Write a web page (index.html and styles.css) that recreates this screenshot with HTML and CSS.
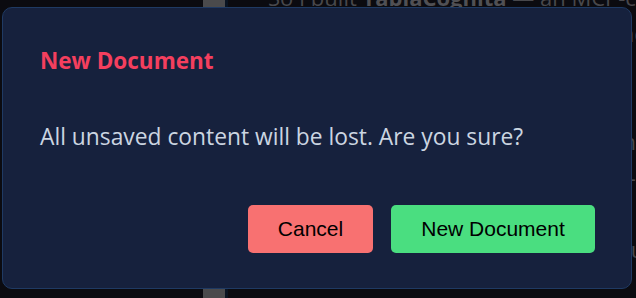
FILE: index.html
```html
<!DOCTYPE html>
<html>
<head>
<meta charset="utf-8">
<link rel="stylesheet" href="styles.css">
</head>
<body>
<div class="page">
  <div class="side"></div>
  <div class="scrollbar"></div>
  <div class="divider"></div>
  <div class="content">
    <p class="bg-line">So I built <b>TablaCognita</b> — an MCP-connected editor for writing with AI</p>
    <p class="bg-line">I wanted a tool that lets me draft and revise alongside an AI</p>
    <p class="bg-line">Short line</p>
    <p class="bg-line">Short line</p>
    <p class="bg-line">that can read and edit the document directly, the way a</p>
    <p class="bg-line">collaborator would, instead of copy-pasting back and forth.</p>
    <p class="bg-line">Short line</p>
    <p class="bg-line">And it works with any MCP client you already use. And</p>
  </div>
</div>
<div class="overlay">
  <div class="dialog">
    <h2 class="title">New Document</h2>
    <p class="message">All unsaved content will be lost. Are you sure?</p>
    <div class="actions">
      <button class="btn btn-cancel">Cancel</button>
      <button class="btn btn-confirm">New Document</button>
    </div>
  </div>
</div>
</body>
</html>
```
FILE: styles.css
```css
* { box-sizing: border-box; }
html, body {
  margin: 0;
  padding: 0;
  width: 636px;
  height: 298px;
  overflow: hidden;
  background: #0b0b10;
}
.page {
  display: flex;
  height: 298px;
}
.side {
  width: 203px;
  flex: none;
  background: #0b0b10;
}
.scrollbar {
  width: 22px;
  flex: none;
  background: #4a4a4c;
}
.divider {
  width: 3px;
  flex: none;
  background: #0a1422;
}
.content {
  flex: 1;
  min-width: 0;
  overflow: hidden;
  padding-left: 40px;
  margin-top: -21px;
  font-family: "Open Sans", "Noto Sans", sans-serif;
  font-size: 22px;
  color: #48484c;
  white-space: nowrap;
}
.bg-line {
  margin: 0;
  line-height: 36px;
}
.bg-line b { color: #505054; }
.overlay {
  position: absolute;
  left: 2px;
  top: 7px;
}
.dialog {
  width: 630px;
  height: 282px;
  background: #16213d;
  border: 1px solid #1f3a63;
  border-radius: 10px;
  padding: 39px 36px 35px 37px;
  display: flex;
  flex-direction: column;
}
.title {
  margin: 0;
  font-family: "Open Sans", "Noto Sans", sans-serif;
  font-weight: 700;
  font-size: 22.5px;
  line-height: 28px;
  color: #f43f5e;
}
.message {
  margin: 48px 0 0 0;
  font-family: "Open Sans", "Noto Sans", sans-serif;
  font-size: 22.8px;
  line-height: 28px;
  color: #cbd5e1;
}
.actions {
  margin-top: auto;
  display: flex;
  justify-content: flex-end;
  gap: 18px;
}
.btn {
  height: 48px;
  border: none;
  border-radius: 5px;
  font-family: "Liberation Sans", Arial, sans-serif;
  font-size: 21px;
  color: #000;
}
.btn-cancel {
  width: 125px;
  background: #f87171;
}
.btn-confirm {
  width: 204px;
  background: #4ade80;
}
```
